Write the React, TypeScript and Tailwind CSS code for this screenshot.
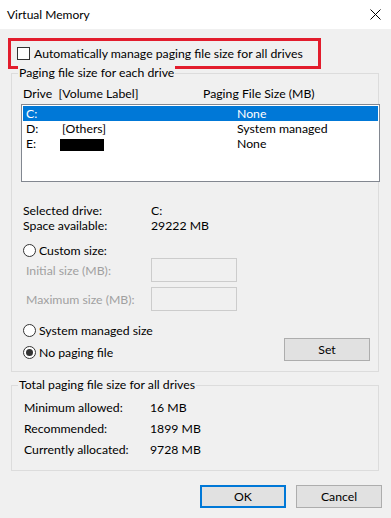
import React from 'react';

const font = { fontFamily: '"Lato", "Liberation Sans", sans-serif' };

function Radio({ checked = false }: { checked?: boolean }) {
  return (
    <span className="flex h-[13px] w-[13px] shrink-0 items-center justify-center rounded-full border border-[#333] bg-white">
      {checked && <span className="h-[7px] w-[7px] rounded-full bg-[#333]" />}
    </span>
  );
}

function Group({ title, className, children }: { title: string; className?: string; children: React.ReactNode }) {
  return (
    <div className={`relative ml-[11px] w-[368px] border border-[#dcdcdc] ${className ?? ''}`}>
      <span className="absolute -top-[9px] left-[6px] bg-[#f0f0f0] px-[1px] leading-[15px]">{title}</span>
      {children}
    </div>
  );
}

const drives = [
  { d: 'C:', label: '', size: 'None', selected: true },
  { d: 'D:', label: '[Others]', size: 'System managed' },
  { d: 'E:', label: 'redacted', size: 'None' },
];

export default function App() {
  return (
    <div className="h-[518px] w-[391px] bg-[#f0f0f0] text-[12.25px] leading-[15px] text-black" style={font}>
      {/* Title bar */}
      <div className="flex h-[29px] items-center justify-between bg-white pl-[7px] pr-[9px]">
        <span className="text-[12px]">Virtual Memory</span>
        <svg width="11" height="11" viewBox="0 0 11 11" className="mr-[1px]">
          <path d="M0.5 0.5 L10.5 10.5 M10.5 0.5 L0.5 10.5" stroke="#000" strokeWidth="1" />
        </svg>
      </div>

      {/* Highlighted checkbox */}
      <div className="ml-[8px] mt-[9px] flex h-[31px] w-[313px] items-center border-[3px] border-[#e21c2c] pl-[6px]">
        <span className="h-[13px] w-[13px] border border-[#333] bg-white" />
        <span className="ml-[4px]">Automatically manage paging file size for all drives</span>
      </div>

      {/* Paging file size for each drive */}
      <Group title="Paging file size for each drive" className="mt-[4px] h-[299px]">
        <div className="mt-[12px] flex pl-[11px]">
          <span className="w-[180px]">Drive&nbsp;&nbsp;[Volume Label]</span>
          <span>Paging File Size (MB)</span>
        </div>
        <div className="ml-[9px] mt-[3px] h-[78px] w-[359px] border border-[#828790] bg-white p-[1px]">
          {drives.map((r) => (
            <div
              key={r.d}
              className={`flex h-[15px] items-center pl-[3px] ${r.selected ? 'bg-[#0078d7] text-white' : ''}`}
            >
              <span className="w-[36px]">{r.d}</span>
              <span className="w-[175px]">
                {r.label === 'redacted' ? (
                  <span className="-ml-[2px] mt-[3px] block h-[12px] w-[44px] bg-black" />
                ) : (
                  r.label
                )}
              </span>
              <span>{r.size}</span>
            </div>
          ))}
        </div>

        <div className="mt-[21px] pl-[11px]">
          <div className="flex">
            <span className="w-[128px]">Selected drive:</span>
            <span>C:</span>
          </div>
          <div className="flex">
            <span className="w-[128px]">Space available:</span>
            <span>29222 MB</span>
          </div>
        </div>

        <div className="mt-[10px] flex items-center gap-[3px] pl-[11px]">
          <Radio />
          <span>Custom size:</span>
        </div>
        <div className="flex items-center pl-[14px] text-[#a0a0a0]">
          <span className="w-[125px]">Initial size (MB):</span>
          <span className="h-[24px] w-[86px] border border-[#cccccc] bg-[#f0f0f0]" />
        </div>
        <div className="mt-[5px] flex items-center pl-[14px] text-[#a0a0a0]">
          <span className="w-[125px]">Maximum size (MB):</span>
          <span className="h-[24px] w-[86px] border border-[#cccccc] bg-[#f0f0f0]" />
        </div>

        <div className="mt-[12px] flex items-center gap-[3px] pl-[11px]">
          <Radio />
          <span>System managed size</span>
        </div>
        <div className="flex items-start justify-between pl-[11px] pr-[8px]">
          <div className="mt-[7px] flex items-center gap-[3px]">
            <Radio checked />
            <span>No paging file</span>
          </div>
          <button className="h-[23px] w-[86px] border border-[#adadad] bg-[#e1e1e1]">Set</button>
        </div>
      </Group>

      {/* Total paging file size */}
      <Group title="Total paging file size for all drives" className="mt-[13px] h-[86px]">
        <div className="pl-[12px] pt-[11px]">
          {[
            ['Minimum allowed:', '16 MB'],
            ['Recommended:', '1899 MB'],
            ['Currently allocated:', '9728 MB'],
          ].map(([k, v]) => (
            <div key={k} className="flex h-[21px] items-center">
              <span className="w-[126px]">{k}</span>
              <span>{v}</span>
            </div>
          ))}
        </div>
      </Group>

      {/* Buttons */}
      <div className="mt-[14px] flex justify-end gap-[10px] pr-[9px]">
        <button className="h-[23px] w-[86px] border-2 border-[#0078d7] bg-[#e1e1e1]">OK</button>
        <button className="h-[23px] w-[86px] border border-[#adadad] bg-[#e1e1e1]">Cancel</button>
      </div>
    </div>
  );
}
